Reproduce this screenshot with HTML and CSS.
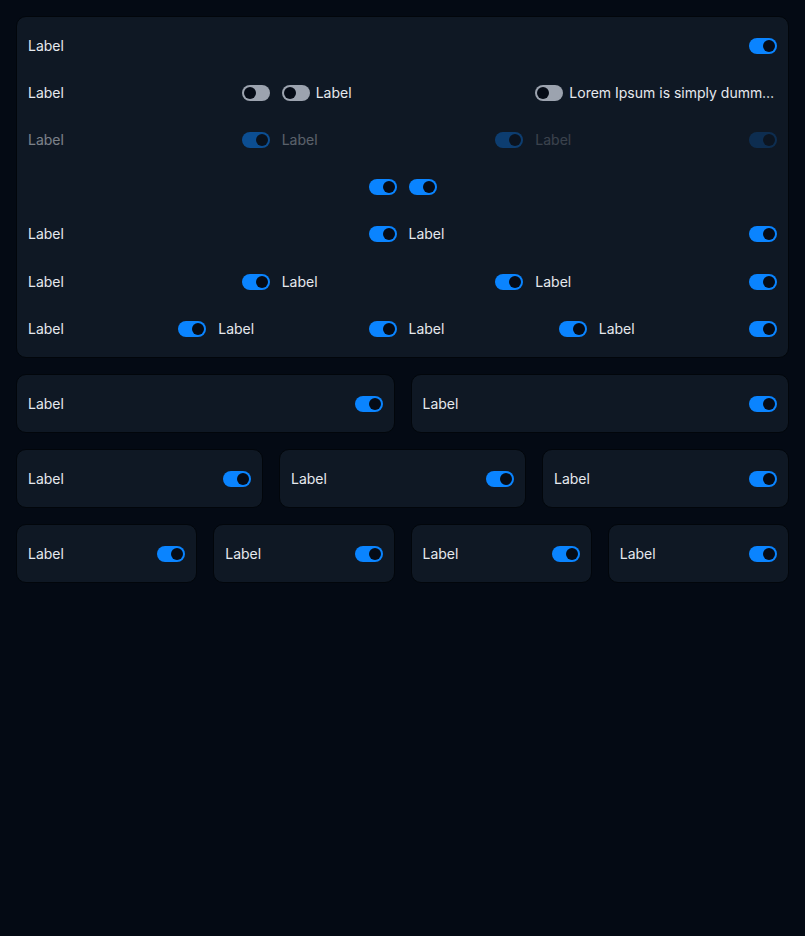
FILE: index.html
```html
<!DOCTYPE html>
<html>
<head>
<meta charset="utf-8">
<link rel="stylesheet" href="styles.css">
</head>
<body>
<div class="page">
  <div class="card main">
    <div class="row c1">
      <div class="cell between"><span class="lbl">Label</span><span class="tg on"></span></div>
    </div>
    <div class="row c3">
      <div class="cell between"><span class="lbl">Label</span><span class="tg off"></span></div>
      <div class="cell start"><span class="tg off"></span><span class="lbl">Label</span></div>
      <div class="cell start"><span class="tg off"></span><span class="lbl trunc">Lorem Ipsum is simply dummy text of the printing and typesetting industry</span></div>
    </div>
    <div class="row c3">
      <div class="cell between dis1"><span class="lbl">Label</span><span class="tg on"></span></div>
      <div class="cell between dis2"><span class="lbl">Label</span><span class="tg on"></span></div>
      <div class="cell between dis3"><span class="lbl">Label</span><span class="tg on"></span></div>
    </div>
    <div class="row c2">
      <div class="cell end"><span class="tg on"></span></div>
      <div class="cell start"><span class="tg on"></span></div>
    </div>
    <div class="row c2">
      <div class="cell between"><span class="lbl">Label</span><span class="tg on"></span></div>
      <div class="cell between"><span class="lbl">Label</span><span class="tg on"></span></div>
    </div>
    <div class="row c3">
      <div class="cell between"><span class="lbl">Label</span><span class="tg on"></span></div>
      <div class="cell between"><span class="lbl">Label</span><span class="tg on"></span></div>
      <div class="cell between"><span class="lbl">Label</span><span class="tg on"></span></div>
    </div>
    <div class="row c4">
      <div class="cell between"><span class="lbl">Label</span><span class="tg on"></span></div>
      <div class="cell between"><span class="lbl">Label</span><span class="tg on"></span></div>
      <div class="cell between"><span class="lbl">Label</span><span class="tg on"></span></div>
      <div class="cell between"><span class="lbl">Label</span><span class="tg on"></span></div>
    </div>
  </div>

  <div class="grid g2">
    <div class="card box"><span class="lbl">Label</span><span class="tg on"></span></div>
    <div class="card box"><span class="lbl">Label</span><span class="tg on"></span></div>
  </div>
  <div class="grid g3">
    <div class="card box"><span class="lbl">Label</span><span class="tg on"></span></div>
    <div class="card box"><span class="lbl">Label</span><span class="tg on"></span></div>
    <div class="card box"><span class="lbl">Label</span><span class="tg on"></span></div>
  </div>
  <div class="grid g4">
    <div class="card box"><span class="lbl">Label</span><span class="tg on"></span></div>
    <div class="card box"><span class="lbl">Label</span><span class="tg on"></span></div>
    <div class="card box"><span class="lbl">Label</span><span class="tg on"></span></div>
    <div class="card box"><span class="lbl">Label</span><span class="tg on"></span></div>
  </div>
</div>
</body>
</html>
```

FILE: styles.css
```css
* { box-sizing: border-box; }
html, body {
  margin: 0;
  padding: 0;
  background: #040a14;
}
body {
  font-family: "Inter", "Liberation Sans", sans-serif;
  font-size: 14px;
  color: #e6e9ee;
}
.page {
  padding: 16px;
  display: flex;
  flex-direction: column;
  gap: 16px;
}
.card {
  background: #0f1824;
  border: 1px solid #02060b;
  border-radius: 10px;
}
.main {
  padding: 5px 11px;
  display: flex;
  flex-direction: column;
}
.row {
  display: grid;
  gap: 12px;
  height: 47.2px;
}
.c1 { grid-template-columns: 1fr; }
.c2 { grid-template-columns: repeat(2, minmax(0, 1fr)); }
.c3 { grid-template-columns: repeat(3, minmax(0, 1fr)); }
.c4 { grid-template-columns: repeat(4, minmax(0, 1fr)); }
.cell {
  display: flex;
  align-items: center;
  min-width: 0;
  gap: 6px;
}
.between { justify-content: space-between; }
.start { justify-content: flex-start; }
.end { justify-content: flex-end; }
.lbl {
  line-height: 20px;
  white-space: nowrap;
}
.trunc {
  overflow: hidden;
  text-overflow: ellipsis;
  min-width: 0;
}
.tg {
  flex: none;
  position: relative;
  width: 28px;
  height: 16px;
  border-radius: 8px;
  background: #0a84ff;
}
.tg::after {
  content: "";
  position: absolute;
  top: 2px;
  width: 12px;
  height: 12px;
  border-radius: 50%;
  background: #050b16;
}
.tg.on::after { left: 14px; }
.tg.off { background: #9ca3af; }
.tg.off::after { left: 2px; }
.dis1 { opacity: 0.5; }
.dis2 { opacity: 0.35; }
.dis3 { opacity: 0.2; }
.grid {
  display: grid;
  gap: 16px;
}
.g2 { grid-template-columns: repeat(2, minmax(0, 1fr)); }
.g3 { grid-template-columns: repeat(3, minmax(0, 1fr)); }
.g4 { grid-template-columns: repeat(4, minmax(0, 1fr)); }
.box {
  height: 59px;
  padding: 0 11px;
  display: flex;
  align-items: center;
  justify-content: space-between;
}
```
